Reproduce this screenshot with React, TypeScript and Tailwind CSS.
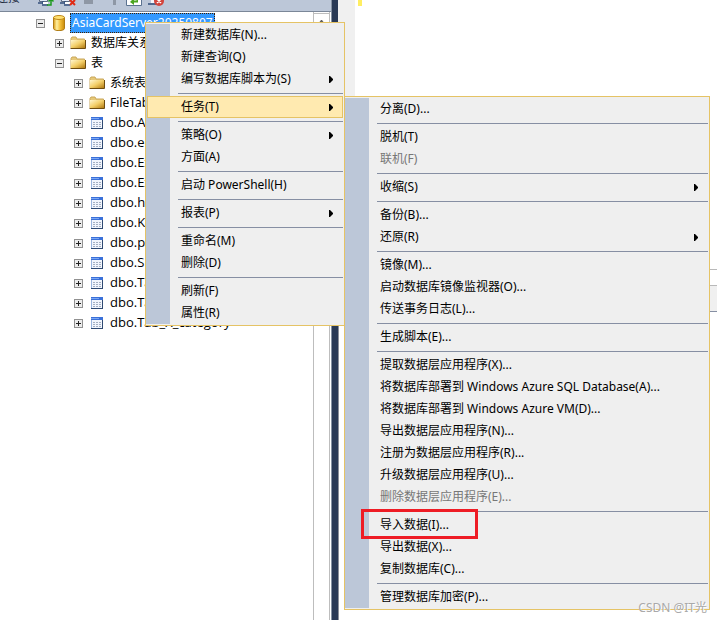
import { useState } from 'react'

interface MenuEntry {
  label: string
  submenu?: boolean
  disabled?: boolean
  marked?: boolean
}

const DATABASE_MENU: MenuEntry[][] = [
  [{ label: '新建数据库(N)...' }, { label: '新建查询(Q)' }, { label: '编写数据库脚本为(S)', submenu: true }],
  [{ label: '任务(T)', submenu: true }],
  [{ label: '策略(O)', submenu: true }, { label: '方面(A)' }],
  [{ label: '启动 PowerShell(H)' }],
  [{ label: '报表(P)', submenu: true }],
  [{ label: '重命名(M)' }, { label: '删除(D)' }],
  [{ label: '刷新(F)' }, { label: '属性(R)' }],
]

const TASKS_MENU: MenuEntry[][] = [
  [{ label: '分离(D)...' }],
  [{ label: '脱机(T)' }, { label: '联机(F)', disabled: true }],
  [{ label: '收缩(S)', submenu: true }],
  [{ label: '备份(B)...' }, { label: '还原(R)', submenu: true }],
  [{ label: '镜像(M)...' }, { label: '启动数据库镜像监视器(O)...' }, { label: '传送事务日志(L)...' }],
  [{ label: '生成脚本(E)...' }],
  [
    { label: '提取数据层应用程序(X)...' },
    { label: '将数据库部署到 Windows Azure SQL Database(A)...' },
    { label: '将数据库部署到 Windows Azure VM(D)...' },
    { label: '导出数据层应用程序(N)...' },
    { label: '注册为数据层应用程序(R)...' },
    { label: '升级数据层应用程序(U)...' },
    { label: '删除数据层应用程序(E)...', disabled: true },
  ],
  [{ label: '导入数据(I)...', marked: true }, { label: '导出数据(X)...' }, { label: '复制数据库(C)...' }],
  [{ label: '管理数据库加密(P)...' }],
]

const TABLES = [
  'dbo.A', 'dbo.el', 'dbo.Ex', 'dbo.Ex', 'dbo.hi', 'dbo.K',
  'dbo.p', 'dbo.S', 'dbo.Ta', 'dbo.Ta', 'dbo.Tab_X_category',
]

function DatabaseIcon() {
  return (
    <svg className="w-4 h-4 shrink-0" viewBox="0 0 16 16">
      <defs>
        <linearGradient id="cylinder">
          <stop offset="0" stopColor="#d9980f" />
          <stop offset="0.3" stopColor="#fff0a0" />
          <stop offset="0.6" stopColor="#f3c03c" />
          <stop offset="1" stopColor="#c98a08" />
        </linearGradient>
      </defs>
      <path d="M2.5 2.5v11c0 2.8 11 2.8 11 0v-11z" fill="url(#cylinder)" stroke="#b07c14" />
      <ellipse cx="8" cy="2.5" rx="5.5" ry="2" fill="#ffdf70" stroke="#c08a1c" />
    </svg>
  )
}

function FolderIcon() {
  return (
    <svg className="w-4 h-4 shrink-0" viewBox="0 0 16 16">
      <defs>
        <linearGradient id="folder" x2="1" y2="1">
          <stop offset="0" stopColor="#fff6cf" />
          <stop offset="0.5" stopColor="#f3cf69" />
          <stop offset="1" stopColor="#b27b12" />
        </linearGradient>
      </defs>
      <path d="M1 3.5L2 2h4l1 2h7.5v9H1z" fill="#e6c878" stroke="#c9a75a" />
      <path d="M1 5h14v8H1z" fill="url(#folder)" />
      <path d="M.5 13.5h15V5" fill="none" stroke="#6e4d10" />
    </svg>
  )
}

function TableIcon() {
  return (
    <svg className="w-3 h-3 shrink-0" viewBox="0 0 12 12" shapeRendering="crispEdges">
      <path d="M0 0h12v12H0z" fill="#2f4a72" />
      <path d="M0 0h11v11H0z" fill="#9bb6de" />
      <path d="M1 3h10v8H1z" fill="#f2f6fd" />
      <path d="M0 0h12v3H0z" fill="#3a70d8" />
      <path d="M0 1h8v1H0z" fill="#7ba6f4" />
      <path d="M2 5h2v1H2zM5 5h2v1H5zM8 5h2v1H8zM2 7h2v1H2zM5 7h2v1H5zM8 7h2v1H8zM2 9h2v1H2zM5 9h2v1H5zM8 9h2v1H8z" fill="#a3afc2" />
    </svg>
  )
}

function Expander({ open, label }: { open: boolean; label: string }) {
  return (
    <button aria-label={label} aria-expanded={open} className="w-[9px] h-[9px] shrink-0">
      <svg className="w-full h-full block" viewBox="0 0 9 9" shapeRendering="crispEdges">
        <path d="M0 0h9v9H0z" fill="#919191" />
        <path d="M1 1h7v7H1z" fill="#ececec" />
        <path d="M2 4h5v1H2z" fill="#222" />
        {!open && <path d="M4 2h1v5H4z" fill="#222" />}
      </svg>
    </button>
  )
}

function TreeRow({ kind, label, level, open = false, selected = false }: {
  kind: 'database' | 'folder' | 'table'
  label: string
  level: 0 | 1 | 2
  open?: boolean
  selected?: boolean
}) {
  const indent = ['pl-9', 'pl-[55px]', 'pl-[74px]'][level]
  const font = kind === 'table' ? "text-[13px] font-['Open_Sans',sans-serif]" : 'text-xs'
  return (
    <li className={`${indent} ${font} h-5 flex items-center`}>
      <Expander open={open} label={label} />
      <span className="w-[25px] shrink-0 flex justify-center pl-[3px]">
        {kind === 'database' && <DatabaseIcon />}
        {kind === 'folder' && <FolderIcon />}
        {kind === 'table' && <TableIcon />}
      </span>
      <span
        className={
          selected
            ? 'h-5 leading-[18px] px-px text-white bg-[#3399ff] border border-dotted border-[#402000] whitespace-nowrap'
            : 'px-0.5 whitespace-nowrap'
        }
      >
        {label}
      </span>
    </li>
  )
}

// server with a plug, the two connection commands differ only in the badge
function ServerIcon({ badge }: { badge: 'connect' | 'disconnect' }) {
  return (
    <svg className="w-4 h-4 shrink-0" viewBox="0 0 16 16">
      <path d="M1.5 4.5h8v7h-8z" fill="#dfe8f5" stroke="#5c6b82" />
      <path d="M0 13h6M4 15h6M5 11v3" stroke="#35507c" strokeWidth="1.5" />
      <path d="M5 12h5v2H5z" fill="#fff" />
      {badge === 'connect' ? (
        <path d="M9 15h4V9M10.500 11.500L13 9l2.500 2.500" fill="none" stroke="#1c9a1c" strokeWidth="1.5" />
      ) : (
        <path d="M10 10l5 5M15 10l-5 5" stroke="#e02a14" strokeWidth="2" />
      )}
    </svg>
  )
}

function Toolbar() {
  return (
    <div className="h-3 flex items-end overflow-hidden bg-[#bcc7d8] border-b border-[#7b8798] pb-[5px] text-xs">
      <div className="flex items-end -ml-1">
        <button className="w-[42px] h-4 leading-4 text-left text-[#1b293e]">连接</button>
        <button aria-label="连接对象资源管理器" className="w-[22px]">
          <ServerIcon badge="connect" />
        </button>
        <button aria-label="断开连接" className="w-6">
          <ServerIcon badge="disconnect" />
        </button>
        <button aria-label="停止" className="w-[26px] pb-0.5">
          <svg className="w-2.5 h-3.5" viewBox="0 0 10 14">
            <path d="M0 4h9v10H0z" fill="#8e97a5" />
          </svg>
        </button>
        <button aria-label="筛选" className="w-4 pb-px">
          <svg className="w-2.5 h-3.5" viewBox="0 0 10 14">
            <path d="M0 0h10L6 6v8H3V6z" fill="#8e97a5" />
          </svg>
        </button>
        <button aria-label="刷新" className="w-[22px]">
          <svg className="w-4 h-4" viewBox="0 0 16 16">
            <path d="M.5.5h15v15H.5z" fill="#fff" stroke="#5b7290" />
            <path d="M4 12l4-4v2.500h2.500V6H12v6.500H8V15z" fill="#4aa520" />
          </svg>
        </button>
        <button aria-label="删除连接" className="w-4">
          <svg className="w-4 h-4" viewBox="0 0 16 16">
            <path d="M0 14h8" stroke="#50698f" strokeWidth="2" />
            <path d="M3 9h6v4H3z" fill="#f3f6fb" />
            <circle cx="11" cy="11" r="5" fill="#d2453d" />
            <path d="M9 9l4 4M13 9l-4 4" stroke="#fff" strokeWidth="1.500" />
          </svg>
        </button>
      </div>
    </div>
  )
}

function Menu({ groups, active, label, onHover }: {
  groups: MenuEntry[][]
  active?: string
  label: string
  onHover?: (label: string) => void
}) {
  return (
    <div role="menu" aria-label={label} className="border border-[#e5c365] py-px bg-[#efefef] text-xs">
      <div className="bg-[linear-gradient(to_right,#bcc7d8_24px,#efefef_24px)]">
        {groups.map((group, i) => (
          <div key={i}>
            {i > 0 && <hr className="ml-8 mr-px mt-[3px] mb-0.5 border-[#868fa3]" />}
            {group.map(entry => (
              <div key={entry.label} className="relative px-px">
                <button
                  role="menuitem"
                  disabled={entry.disabled}
                  onMouseEnter={() => onHover?.(entry.label)}
                  className={`flex w-full h-[22px] items-center pl-[33px] pr-[9px] border text-left whitespace-nowrap ${
                    entry.disabled ? 'text-[#777]' : ''
                  } ${entry.label === active ? 'bg-[#ffeab0] border-[#e5c365]' : 'border-transparent'}`}
                >
                  <span className="flex-1">{entry.label}</span>
                  {entry.submenu && (
                    <svg className="w-1 h-[7px]" viewBox="0 0 4 7">
                      <path d="M0 0h1l3 3v1L1 7H0z" />
                    </svg>
                  )}
                </button>
                {entry.marked && (
                  <span className="absolute left-4 -top-[5px] w-[117px] h-[30px] border-3 border-[#ee1c25] pointer-events-none" />
                )}
              </div>
            ))}
          </div>
        ))}
      </div>
    </div>
  )
}

export default function App() {
  const [active, setActive] = useState('任务(T)')

  return (
    <div className="relative h-screen flex overflow-hidden bg-white text-xs text-black font-['Noto_Sans','Noto_Sans_CJK_SC',sans-serif]">
      <aside className="w-[332px] shrink-0 flex flex-col border-r border-[#8591a2]">
        <Toolbar />
        <div className="flex-1 flex pr-px">
          <ul className="flex-1 min-w-0 pt-px">
            <TreeRow kind="database" label="AsiaCardServer20250807" level={0} open selected />
            <TreeRow kind="folder" label="数据库关系图" level={1} />
            <TreeRow kind="folder" label="表" level={1} open />
            <TreeRow kind="folder" label="系统表" level={2} />
            <TreeRow kind="folder" label="FileTables" level={2} />
            {TABLES.map((name, i) => (
              <TreeRow key={i} kind="table" label={name} level={2} />
            ))}
          </ul>
          <div className="w-[17px] border-x border-[#bdbdbd] pt-px">
            <button aria-label="向上滚动" className="w-full h-4 flex justify-center border-t border-[#bdbdbd] pt-1.5">
              <svg className="w-[7px] h-1" viewBox="0 0 7 4">
                <path d="M3 0h1l3 4H0z" fill="#606060" />
              </svg>
            </button>
          </div>
        </div>
      </aside>
      <div className="w-1.5 shrink-0 bg-[#293955]" />
      <main className="flex-1 flex flex-col">
        <div className="h-[270px] flex border-b border-[#b9b9b9]">
          <div className="w-[17px] bg-[#f0f0f0]" />
          <div className="ml-[3px] w-1 h-1.5 bg-[#ffee62]" />
        </div>
        <div className="mt-[15px] h-[27px] bg-[#f0f0f0] border-t border-b border-t-[#b9b9b9] border-b-[#868fa3]" />
        <div className="flex-1 border-l border-[#8b8f99]" />
      </main>

      <div className="absolute left-[145px] top-[22px] w-[200px]">
        <Menu groups={DATABASE_MENU} active={active} label="数据库" onHover={setActive} />
      </div>
      <div className="absolute left-[344px] top-24 w-[366px]">
        <Menu groups={TASKS_MENU} label="任务" />
      </div>
      <p className="absolute right-2.5 bottom-1 leading-4 text-[#a9a9a9] [text-shadow:1px_1px_0_#fff]">CSDN @IT光</p>
    </div>
  )
}
